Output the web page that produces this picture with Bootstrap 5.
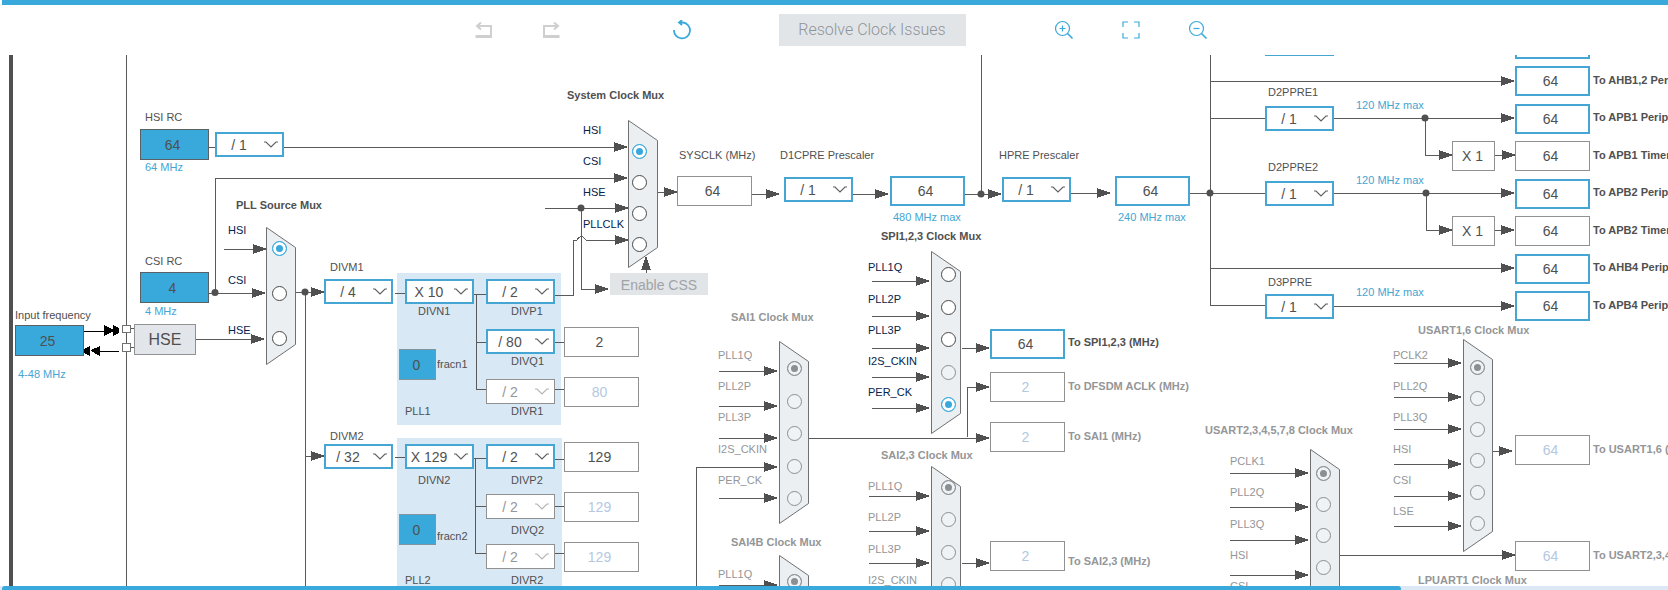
<!DOCTYPE html>
<html lang="en">
<head>
<meta charset="utf-8">
<meta name="viewport" content="width=device-width, initial-scale=1">
<title>Clock Configuration</title>
<link href="https://cdn.jsdelivr.net/npm/bootstrap@5.3.0/dist/css/bootstrap.min.css" rel="stylesheet">
<style>
  :root { --accent: #39a9dc; --edge: #45a5d3; --ink: #505050; --dim: #949698; --line: #5a5a5a; --navy: #03234b; --pan-y: 55px; }
  body { font-family: "Liberation Sans", Arial, sans-serif; color: var(--ink); background: #fff; }

  .topstrip { height: 5px; margin-left: 2px; background: var(--accent); }
  .toolstrip { height: 50px; padding-left: 13px; }
  .tool { width: 20px; height: 20px; padding: 0; border: 0; line-height: 1; color: var(--accent); }
  .tool:disabled { color: #cfcfcf; opacity: 1; border: 0; }
  .tool svg { display: block; }
  .gap-history { margin-left: 47px; }
  .gap-refresh { margin-left: 111px; }
  .gap-resolve { margin: 0 88px 0 87px; }
  .resolve { width: 187px; height: 32px; padding: 0; border: 0; border-radius: 0; font: 300 16px/32px Roboto, "Liberation Sans", sans-serif; }
  .resolve, .resolve:disabled { background: #e2e5e8; color: #8f9499; opacity: 1; border: 0; }

  .viewport { min-height: 0; }
  .scene { top: calc(-1 * var(--pan-y)); height: calc(100% + var(--pan-y)); }
  .scene > * { position: absolute; }
  .wires { left: 0; top: 0; shape-rendering: crispEdges; }
  .wires path { fill: none; stroke: var(--line); }
  .wires .flow { marker-end: url(#head); }
  .wires .muxbody { fill: #ebeff2; stroke: #707070; shape-rendering: auto; }
  .wires .pll { fill: #d9e8f5; }
  .wires .bar { fill: var(--ink); }
  .wires .ext { fill: #000; stroke: none; }
  .wires .ext-line { stroke: #000; }
  .wires .pin { fill: #fff; stroke: #707070; }
  .wires circle { fill: var(--ink); shape-rendering: auto; }

  .cap { font-size: 11px; line-height: 14px; white-space: nowrap; }
  .cap-blue { color: var(--edge); }
  .cap-navy { color: var(--navy); }
  .cap-dim { color: var(--dim); }

  .val { width: 75px; height: 30px; padding: 0 4px 0 0; border: 1px solid #919191; border-radius: 0; font-size: 14px; line-height: 20px; text-align: center; color: var(--ink); background: #fff; }
  .val-on { border: 2px solid var(--edge); }
  .val-src { width: 69px; height: 31px; background: var(--accent); border-color: #5b6064; }
  .val-frac { width: 37px; height: 31px; padding-right: 2px; background: var(--accent); border-color: #8095a0; }
  .val-mul { width: 43px; padding-right: 2px; }
  .val:disabled { background: #fff; color: #b4c8e0; }

  .pick { width: 69px; height: 25px; padding: 2px 21px 0 0; border: 2px solid var(--edge); border-radius: 0; font-size: 14px; line-height: 19px; text-align: center; text-align-last: center; color: var(--ink);
    background: #fff url("data:image/svg+xml,%3Csvg xmlns='http://www.w3.org/2000/svg' width='14' height='7' fill='none' stroke='%23606060' stroke-width='1.2'%3E%3Cpath d='M0 1h2l5 5 5-5h2'/%3E%3C/svg%3E") no-repeat right 4px center / 14px 7px; }
  .pick:disabled { border: 1px solid #919191; color: var(--dim);
    background: #fff url("data:image/svg+xml,%3Csvg xmlns='http://www.w3.org/2000/svg' width='14' height='7' fill='none' stroke='%23b4b4b4' stroke-width='1.2'%3E%3Cpath d='M0 1h2l5 5 5-5h2'/%3E%3C/svg%3E") no-repeat right 5px center / 14px 7px; }

  .dot { appearance: none; width: 15px; height: 15px; margin: 0; border: 1px solid #484848; border-radius: 50%; background: #fff; }
  .dot:checked { border-color: var(--accent); background: var(--accent); box-shadow: inset 0 0 0 3px #fff; }
  .dot:disabled { border-color: #8c8f92; background: #eff3f6; }
  .dot:disabled:checked { background: #8c8f92; box-shadow: inset 0 0 0 3px #eff3f6; }

  .osc { width: 62px; height: 31px; padding: 0; border: 1px solid #919191; border-radius: 0; font-size: 16px; line-height: 28px; color: var(--ink); background: #e2e6ea; }
  .css-btn, .css-btn:disabled { width: 98px; height: 22px; padding: 0; border: 0; border-radius: 0; font-size: 14px; line-height: 24px; color: #a0a3a6; background: #e2e5e8; opacity: 1; }

  .hscroll { height: 4px; background: #dce9f5; }
  .hthumb { width: calc(84% - 2px); margin-left: 2px; background: var(--accent); border-radius: 3px 3px 0 0; }
</style>
</head>
<body>
<div class="vh-100 d-flex flex-column overflow-hidden">
  <div class="topstrip flex-shrink-0"></div>

  <nav class="toolstrip d-flex align-items-center justify-content-center flex-shrink-0" aria-label="Clock tools">
    <button type="button" class="btn tool" disabled aria-label="Undo">
      <svg width="20" height="20" viewBox="0 0 20 20" fill="none" stroke="currentColor" stroke-width="2"><path d="M3 6h14v10.500M7 2.500L3 6l4 3.500"/><path d="M1.500 16.500h16.500" stroke-width="3"/></svg>
    </button>
    <button type="button" class="btn tool gap-history" disabled aria-label="Redo">
      <svg width="20" height="20" viewBox="0 0 20 20" fill="none" stroke="currentColor" stroke-width="2"><path d="M17 6H3v10.500M13 2.500L17 6l-4 3.500"/><path d="M2 16.500h16.500" stroke-width="3"/></svg>
    </button>
    <button type="button" class="btn tool gap-refresh" aria-label="Reset">
      <svg width="20" height="20" viewBox="0 0 20 20" fill="none" stroke="currentColor" stroke-width="1.800"><path d="M2 10a8 8 0 1 0 9-7.500H7M10 0L7 2.500 10 5"/></svg>
    </button>
    <button type="button" class="btn resolve gap-resolve" disabled>Resolve Clock Issues</button>
    <button type="button" class="btn tool" aria-label="Zoom in">
      <svg width="20" height="20" viewBox="0 0 20 20" fill="none" stroke="currentColor" stroke-width="1.200"><circle cx="8.500" cy="8.500" r="7"/><path d="M5.500 8.500h6M8.500 5.500v6"/><path d="M13.500 13.500l5 5" stroke-width="1.600"/></svg>
    </button>
    <button type="button" class="btn tool gap-history" aria-label="Fit to window">
      <svg width="20" height="20" viewBox="0 0 20 20" fill="none" stroke="currentColor" stroke-width="1.200"><path d="M2 7V2h5M13 2h5v5M18 13v5h-5M7 18H2v-5"/></svg>
    </button>
    <button type="button" class="btn tool gap-history" aria-label="Zoom out">
      <svg width="20" height="20" viewBox="0 0 20 20" fill="none" stroke="currentColor" stroke-width="1.200"><circle cx="8.500" cy="8.500" r="7"/><path d="M5.500 8.500h6"/><path d="M13.500 13.500l5 5" stroke-width="1.600"/></svg>
    </button>
  </nav>

  <main class="viewport flex-grow-1 position-relative overflow-hidden">
    <div class="scene position-absolute w-100" id="scene">
      <svg class="wires w-100 h-100" aria-hidden="true">
        <defs>
          <marker id="head" markerUnits="userSpaceOnUse" markerWidth="14" markerHeight="10" refX="13" refY="5" orient="auto"><polygon points="0,0 14,5 0,10" fill="#505050"/></marker>
        </defs>
        <!-- chip boundary and PLL areas -->
        <rect class="bar" x="9" y="0" width="4" height="2000"/>
        <path d="M126 0V2000"/>
        <rect class="pll" x="397" y="273" width="164" height="152"/>
        <rect class="pll" x="397" y="438" width="165" height="180"/>
        <!-- oscillators to muxes -->
        <path d="M209 147H216"/>
        <path class="flow" d="M284 147H627"/>
        <path class="flow" d="M215 292V178H627"/>
        <path class="flow" d="M209 293H265"/>
        <path class="flow" d="M224 249H266"/>
        <path class="flow" d="M196 339H264"/>
        <path class="ext-line" d="M84 331H106M98 351H119"/>
        <path class="ext" d="M104 325l10 5v1l-10 5zM113 325l6 3v5l-6 3zM100 346l-9 4v1l9 5zM90 346l-6 3v4l6 3z"/>
        <path d="M130 328H134M130 347H134"/>
        <rect class="pin" x="122" y="325" width="8" height="7"/>
        <rect class="pin" x="122" y="343" width="8" height="8"/>
        <!-- PLL 1 and 2 -->
        <path class="flow" d="M296 292H324"/>
        <path d="M305 292V2000"/>
        <path class="flow" d="M305 456H324"/>
        <path d="M395 293H405M395 457H405"/>
        <path d="M474 294H486M476 294V389H486M476 342H486M555 342H564M555 389H564"/>
        <path d="M474 458H486M475 458V553H486M475 506H486M555 459H564M555 506H564M555 553H564"/>
        <path class="flow" d="M555 295H573V240H577Q581 233 586 240H628"/>
        <path class="flow" d="M545 208H628"/>
        <path class="flow" d="M581 208V289H608"/>
        <path class="flow" d="M646 273V257"/>
        <!-- system clock row -->
        <path class="flow" d="M658 192H677"/>
        <path class="flow" d="M752 194H779"/>
        <path class="flow" d="M852 194H888"/>
        <path class="flow" d="M965 194H1001"/>
        <path d="M981 0V194"/>
        <path class="flow" d="M1071 193H1110"/>
        <path d="M1190 193H1265M1210 0V305H1265M1210 118H1265"/>
        <!-- domain prescalers -->
        <path class="flow" d="M1210 81H1514"/>
        <path class="flow" d="M1334 118H1514"/>
        <path class="flow" d="M1425 118V155H1452"/>
        <path class="flow" d="M1495 155H1515"/>
        <path class="flow" d="M1334 193H1514"/>
        <path class="flow" d="M1426 193V230H1452"/>
        <path class="flow" d="M1495 230H1514"/>
        <path class="flow" d="M1210 268H1514"/>
        <path class="flow" d="M1334 306H1514"/>
        <!-- mux outputs -->
        <path class="flow" d="M962 348H989"/>
        <path class="flow" d="M809 438H989"/>
        <path class="flow" d="M967 437V387H989"/>
        <path class="flow" d="M696 2000V467H777"/>
        <path class="flow" d="M962 563H989"/>
        <path class="flow" d="M1493 451H1512"/>
        <path class="flow" d="M1340 555H1515"/>
        <circle cx="215" cy="292.500" r="3.500"/><circle cx="305" cy="292" r="3.500"/><circle cx="581" cy="208" r="3.500"/>
        <circle cx="981" cy="194" r="3.500"/><circle cx="1210" cy="193" r="3.500"/><circle cx="1425" cy="118" r="3.500"/><circle cx="1426" cy="193" r="3.500"/>
        <g id="muxLayer"></g>
      </svg>
      <button type="button" class="btn osc" id="hse">HSE</button>
      <button type="button" class="btn css-btn" id="css" disabled>Enable CSS</button>
    </div>
  </main>

  <div class="hscroll d-flex flex-shrink-0"><div class="hthumb"></div></div>
</div>

<script src="https://cdn.jsdelivr.net/npm/bootstrap@5.3.0/dist/js/bootstrap.bundle.min.js"></script>
<script>
  const scene = document.getElementById('scene');
  const muxLayer = document.getElementById('muxLayer');
  let serial = 0;

  function place(el, x, y) {
    el.style.left = x + 'px';
    el.style.top = y + 'px';
    if (!el.parentNode) scene.appendChild(el);
    return el;
  }
  // Captions are given by their baseline, 11px below the top of the line.
  function caption(text, x, base, cls, target) {
    const el = document.createElement(target ? 'label' : 'div');
    el.className = 'cap ' + (cls || '');
    el.textContent = text;
    if (target) el.htmlFor = target.id;
    return place(el, x, base - 11);
  }
  function value(text, x, y, cls, name, off) {
    const el = document.createElement('input');
    el.type = 'text';
    el.id = 'n' + (++serial);
    el.className = 'form-control val ' + (cls || '');
    el.value = text;
    el.readOnly = !/src|frac/.test(cls || '');
    el.disabled = !!off;
    el.setAttribute('aria-label', name);
    return place(el, x, y);
  }
  function select(text, x, y, name, off) {
    const el = document.createElement('select');
    el.id = 'n' + (++serial);
    el.className = 'form-select pick';
    el.disabled = !!off;
    el.setAttribute('aria-label', name);
    el.add(new Option(text));
    return place(el, x, y);
  }

  place(document.getElementById('hse'), 134, 324);
  place(document.getElementById('css'), 610, 273);

  // Source fields: value, x, y, caption, caption x, caption baseline, range text, range x, range baseline
  [['64', 140, 129, 'HSI RC', 145, 121, '64 MHz', 145, 171],
   ['4', 140, 272, 'CSI RC', 145, 265, '4 MHz', 145, 315],
   ['25', 15, 325, 'Input frequency', 15, 319, '4-48 MHz', 18, 378]
  ].forEach(s => {
    const f = value(s[0], s[1], s[2], 'val-src', s[3]);
    caption(s[3], s[4], s[5], '', f);
    caption(s[6], s[7], s[8], 'cap-blue');
  });

  // Dividers and multipliers: value, x, y, caption, caption x, caption baseline, disabled
  [['/ 1', 215, 132, ''],
   ['/ 4', 324, 279, 'DIVM1', 330, 271], ['/ 32', 324, 444, 'DIVM2', 330, 440],
   ['X 10', 405, 279, 'DIVN1', 418, 315], ['/ 2', 486, 279, 'DIVP1', 511, 315],
   ['/ 80', 486, 329, 'DIVQ1', 511, 365], ['/ 2', 486, 379, 'DIVR1', 511, 415, true],
   ['X 129', 405, 444, 'DIVN2', 418, 484], ['/ 2', 486, 444, 'DIVP2', 511, 484],
   ['/ 2', 486, 494, 'DIVQ2', 511, 534, true], ['/ 2', 486, 544, 'DIVR2', 511, 584, true],
   ['/ 1', 784, 177, 'D1CPRE Prescaler', 780, 159], ['/ 1', 1002, 177, 'HPRE Prescaler', 999, 159],
   ['/ 1', 1265, 31, ''],
   ['/ 1', 1265, 106, 'D2PPRE1', 1268, 96], ['/ 1', 1265, 181, 'D2PPRE2', 1268, 171],
   ['/ 1', 1265, 294, 'D3PPRE', 1268, 286]
  ].forEach(d => {
    const f = select(d[0], d[1], d[2], d[3] || 'Divider', d[6]);
    if (d[3]) caption(d[3], d[4], d[5], '', f);
  });

  // Fractional parts and PLL names
  caption('fracn1', 437, 368, '', value('0', 399, 349, 'val-frac', 'fracn1'));
  caption('fracn2', 437, 540, '', value('0', 399, 514, 'val-frac', 'fracn2'));
  caption('PLL1', 405, 415);
  caption('PLL2', 405, 584);

  // Plain results: value, x, y, style, name, disabled
  [['2', 564, 327, '', 'PLL1 Q'], ['80', 564, 377, '', 'PLL1 R', true],
   ['129', 564, 442, '', 'PLL2 P'], ['129', 564, 492, '', 'PLL2 Q', true], ['129', 564, 542, '', 'PLL2 R', true],
   ['64', 890, 176, 'val-on', 'CPU clock'], ['64', 1115, 176, 'val-on', 'HCLK'],
   ['X 1', 1452, 141, 'val-mul', 'APB1 timer multiplier'], ['X 1', 1452, 216, 'val-mul', 'APB2 timer multiplier'],
   ['64', 1515, 29, 'val-on', 'AXI clock']
  ].forEach(v => value(...v));
  caption('SYSCLK (MHz)', 679, 159, '', value('64', 677, 176, '', 'SYSCLK'));

  // Limits: text, x, baseline
  [['480 MHz max', 893, 221], ['240 MHz max', 1118, 221], ['120 MHz max', 1356, 109],
   ['120 MHz max', 1356, 184], ['120 MHz max', 1356, 296]
  ].forEach(l => caption(l[0], l[1], l[2], 'cap-blue'));

  // Outputs: value, x, y, caption, caption baseline, state
  [['64', 1515, 66, 'To AHB1,2 Peripheral Clocks (MHz)', 84, 'on'],
   ['64', 1515, 104, 'To APB1 Peripheral Clocks (MHz)', 121, 'on'],
   ['64', 1515, 141, 'To APB1 Timer Clocks (MHz)', 159, ''],
   ['64', 1515, 179, 'To APB2 Peripheral Clocks (MHz)', 196, 'on'],
   ['64', 1515, 216, 'To APB2 Timer Clocks (MHz)', 234, ''],
   ['64', 1515, 254, 'To AHB4 Peripheral Clocks (MHz)', 271, 'on'],
   ['64', 1515, 291, 'To APB4 Peripheral Clocks (MHz)', 309, 'on'],
   ['64', 1515, 435, 'To USART1,6 (MHz)', 453, 'off'],
   ['64', 1515, 541, 'To USART2,3,4,5,7,8 (MHz)', 559, 'off'],
   ['64', 990, 329, 'To SPI1,2,3 (MHz)', 346, 'on'],
   ['2', 990, 372, 'To DFSDM ACLK (MHz)', 390, 'off'],
   ['2', 990, 422, 'To SAI1 (MHz)', 440, 'off'],
   ['2', 990, 541, 'To SAI2,3 (MHz)', 565, 'off']
  ].forEach(o => {
    const f = value(o[0], o[1], o[2], o[5] === 'on' ? 'val-on' : '', o[3], o[5] === 'off');
    caption(o[3], o[1] + 78, o[4], 'fw-bold' + (o[5] === 'off' ? ' cap-dim' : ''), f);
  });

  // Multiplexers. Each input: label, label baseline, radio centre y, wire y (0 when drawn with the main wires)
  [{ title: 'PLL Source Mux', tx: 236, ty: 209, x: 266, y: 227, h: 137, cx: 280, lx: 228, pick: 0,
     ins: [['HSI', 234, 249, 0], ['CSI', 284, 294, 0], ['HSE', 334, 339, 0]] },
   { title: 'System Clock Mux', tx: 567, ty: 99, x: 628, y: 120, h: 147, cx: 640, lx: 583, pick: 0,
     ins: [['HSI', 134, 152, 0], ['CSI', 165, 183, 0], ['HSE', 196, 214, 0], ['PLLCLK', 228, 245, 0]] },
   { title: 'SPI1,2,3 Clock Mux', tx: 881, ty: 240, x: 931, y: 251, h: 182, cx: 949, lx: 868, wx: 872, pick: 4, unavailable: 3,
     ins: [['PLL1Q', 271, 275, 281], ['PLL2P', 303, 308, 316], ['PLL3P', 334, 340, 348], ['I2S_CKIN', 365, 373, 377], ['PER_CK', 396, 405, 408]] },
   { title: 'SAI1 Clock Mux', tx: 731, ty: 321, x: 779, y: 341, h: 182, cx: 795, lx: 718, wx: 719, pick: 0, off: true,
     ins: [['PLL1Q', 359, 369, 371], ['PLL2P', 390, 402, 406], ['PLL3P', 421, 434, 438], ['I2S_CKIN', 453, 467, 0], ['PER_CK', 484, 499, 498]] },
   { title: 'SAI4B Clock Mux', tx: 731, ty: 546, x: 779, y: 555, h: 182, cx: 795, lx: 718, wx: 719, pick: 0, off: true,
     ins: [['PLL1Q', 578, 582, 585]] },
   { title: 'SAI2,3 Clock Mux', tx: 881, ty: 459, x: 931, y: 466, h: 182, cx: 949, lx: 868, wx: 869, pick: 0, off: true,
     ins: [['PLL1Q', 490, 488, 496], ['PLL2P', 521, 520, 531], ['PLL3P', 553, 553, 563], ['I2S_CKIN', 584, 585, 594]] },
   { title: 'USART1,6 Clock Mux', tx: 1418, ty: 334, x: 1463, y: 339, h: 212, cx: 1478, lx: 1393, wx: 1394, pick: 0, off: true,
     ins: [['PCLK2', 359, 368, 363], ['PLL2Q', 390, 399, 397], ['PLL3Q', 421, 430, 429], ['HSI', 453, 461, 464], ['CSI', 484, 493, 496], ['LSE', 515, 524, 526]] },
   { title: 'USART2,3,4,5,7,8 Clock Mux', tx: 1205, ty: 434, x: 1310, y: 449, h: 212, cx: 1324, lx: 1230, wx: 1230, pick: 0, off: true,
     ins: [['PCLK1', 465, 474, 473], ['PLL2Q', 496, 505, 507], ['PLL3Q', 528, 536, 540], ['HSI', 559, 568, 575], ['CSI', 590, 599, 606]] }
  ].forEach((m, k) => {
    const svg = (cls, d) => {
      const p = document.createElementNS('http://www.w3.org/2000/svg', 'path');
      p.setAttribute('class', cls);
      p.setAttribute('d', d);
      // Half a unit centres the 1px outline on whole pixels
      if (cls === 'muxbody') p.setAttribute('transform', 'translate(.5 .5)');
      muxLayer.appendChild(p);
    };
    svg('muxbody', `M${m.x} ${m.y}l29 20v${m.h - 40}l-29 20z`);
    caption(m.title, m.tx, m.ty, 'fw-bold' + (m.off ? ' cap-dim' : ''));
    m.ins.forEach((n, i) => {
      const r = document.createElement('input');
      r.type = 'radio';
      r.name = 'mux' + k;
      r.id = `mux${k}-${i}`;
      r.className = 'dot';
      r.checked = i === m.pick;
      r.disabled = !!m.off || i === m.unavailable;
      place(r, m.cx - 8, n[2] - 8);
      caption(n[0], m.lx, n[1], m.off ? 'cap-dim' : 'cap-navy', r);
      if (n[3]) svg('flow', `M${m.wx} ${n[3]}H${m.x - 2}`);
    });
  });
  caption('LPUART1 Clock Mux', 1418, 584, 'fw-bold cap-dim');
</script>
</body>
</html>
